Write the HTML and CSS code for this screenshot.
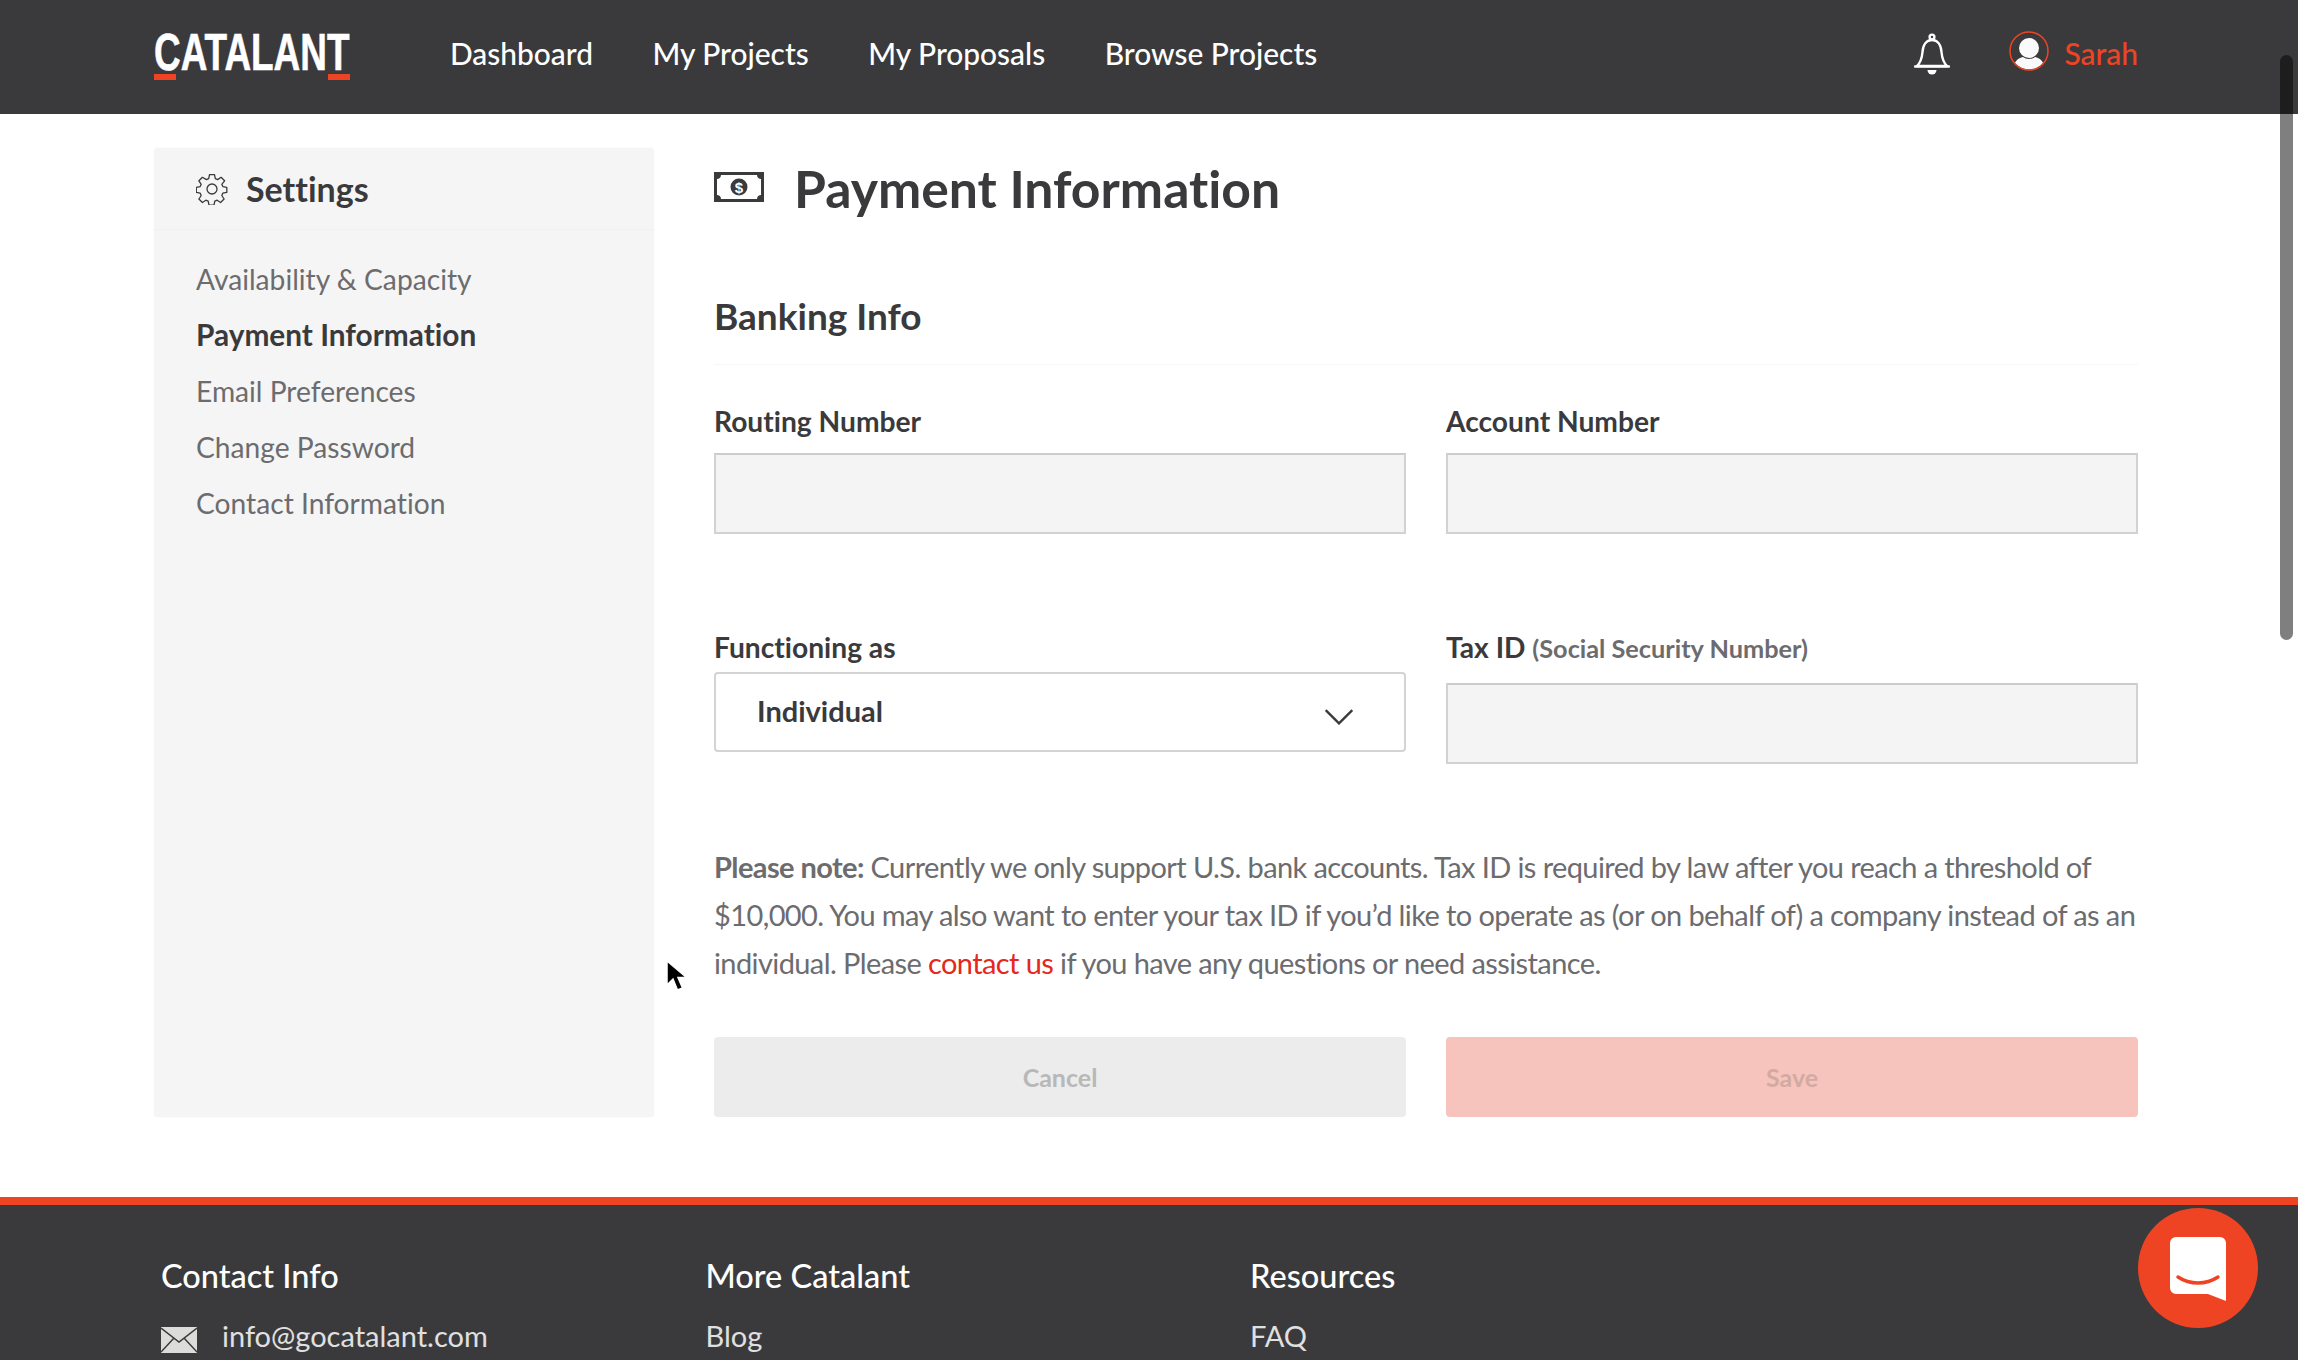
FILE: index.html
```html
<!DOCTYPE html>
<html lang="en">
<head>
<meta charset="utf-8">
<title>Payment Information</title>
<link rel="stylesheet" href="styles.css">
</head>
<body>
<header class="topbar">
  <div class="logo"><span class="logo-text">CATALANT</span><i class="logo-mark logo-mark-l"></i><i class="logo-mark logo-mark-r"></i></div>
  <nav class="topnav">
    <a>Dashboard</a><a>My Projects</a><a>My Proposals</a><a>Browse Projects</a>
  </nav>
  <div class="topright">
    <svg class="bell" viewBox="0 0 36 42" fill="none" stroke="#fff" stroke-width="2.4"><circle cx="18" cy="4" r="2.4"/><path d="M3 33c4-4 5-8 5.500-14C9 11 13 7 18 7s9 4 9.500 12c.5 6 1.500 10 5.500 14z" stroke-linejoin="round"/><path d="M1 33.500h34" stroke-linecap="round"/><path d="M13.500 37h9a4.500 4.500 0 0 1-9 0z" fill="#fff" stroke="none"/></svg>
    <svg class="avatar" viewBox="0 0 40 40"><defs><clipPath id="avclip"><circle cx="20" cy="20" r="18.500"/></clipPath></defs><circle cx="20" cy="20" r="19" fill="#3a3a3d"/><g clip-path="url(#avclip)" fill="#fafafa"><circle cx="20" cy="17" r="10"/><path d="M4 40c0-9 5-13 10-14 3 2.500 9 2.500 12 0 5 1 10 5 10 14z"/></g><circle cx="20" cy="20" r="19" fill="none" stroke="#ef4423" stroke-width="1.500"/></svg>
    <span class="username">Sarah</span>
  </div>
</header>

<div class="content">
  <aside class="sidebar">
    <div class="side-head">
      <svg class="gear" viewBox="0 0 32 32" fill="none" stroke="#3a3a3d" stroke-width="1.300" stroke-linejoin="round"><path d="M13.500 2h5l.8 4 2.300 1 3.500-2.300 3.500 3.500L25.800 11.700l1 2.300 4 .8v5l-4 .8-1 2.300 2.300 3.500-3.500 3.500-3.500-2.300-2.300 1-.8 3.900h-5l-.8-3.900-2.300-1-3.500 2.300-3.500-3.500 2.300-3.500-1-2.300-3.900-.8v-5l3.900-.8 1-2.300-2.300-3.500 3.500-3.500L10.400 7l2.300-1z" transform="translate(0 -.4)"/><circle cx="16" cy="16" r="5"/></svg>
      <span>Settings</span>
    </div>
    <ul class="side-list">
      <li>Availability &amp; Capacity</li>
      <li class="active">Payment Information</li>
      <li>Email Preferences</li>
      <li>Change Password</li>
      <li>Contact Information</li>
    </ul>
  </aside>

  <main class="main">
    <div class="title-row">
      <svg class="money" viewBox="0 0 50 30"><path fill="#3a3a3d" d="M0 0h50v30H0z"/><path fill="#fff" d="M7 3h36c0 2.500 2 4 4 4v16c-2 0-4 1.500-4 4H7c0-2.500-2-4-4-4V7c2 0 4-1.500 4-4z"/><circle cx="25" cy="15" r="8.500" fill="#3a3a3d"/><text x="25" y="20.500" text-anchor="middle" class="money-sign">$</text></svg>
      <h1>Payment Information</h1>
    </div>
    <h2>Banking Info</h2>
    <div class="form-row row-one">
      <div class="field"><label>Routing Number</label><div class="input"></div></div>
      <div class="field"><label>Account Number</label><div class="input"></div></div>
    </div>
    <div class="form-row row-two">
      <div class="field"><label>Functioning as</label>
        <div class="select"><span class="select-value">Individual</span>
          <svg class="chevron" viewBox="0 0 28 16" fill="none" stroke="#3a3a3d" stroke-width="2.200"><path d="M1.500 2l12.500 12.500L26.500 2"/></svg>
        </div>
      </div>
      <div class="field"><label class="tax-label">Tax ID <small>(Social Security Number)</small></label><div class="input"></div></div>
    </div>
    <p class="note"><b>Please note:</b> Currently we only support U.S. bank accounts. Tax ID is required by law after you reach a threshold of<br>$10,000. You may also want to enter your tax ID if you’d like to operate as (or on behalf of) a company instead of as an<br>individual. Please <a>contact us</a> if you have any questions or need assistance.</p>
    <div class="form-row buttons">
      <button class="btn btn-cancel">Cancel</button>
      <button class="btn btn-save">Save</button>
    </div>
  </main>
</div>

<footer class="footer">
  <div class="foot-col">
    <h3>Contact Info</h3>
    <div class="foot-item foot-mail">
      <svg class="mail" viewBox="0 0 36 26"><path fill="#dcdcda" d="M0 0h36v26H0z"/><path d="M0 1l18 14L36 1M0 25l13-14M36 25L23 11" fill="none" stroke="#3a3a3d" stroke-width="1.500"/></svg>
      <span>info@gocatalant.com</span>
    </div>
  </div>
  <div class="foot-col"><h3>More Catalant</h3><div class="foot-item">Blog</div></div>
  <div class="foot-col"><h3>Resources</h3><div class="foot-item">FAQ</div></div>
</footer>

<div class="scrollbar"></div>
<svg class="cursor" viewBox="0 0 22 32"><path d="M2 1v24l6-6 4.500 11 5-2-4.500-10.500h8.500z" fill="#000" stroke="#fff" stroke-width="1.500"/></svg>
<div class="chat">
  <svg class="chat-icon" viewBox="0 0 56 64"><path fill="#fff" d="M6 0h44a6 6 0 0 1 6 6v58L38 57H6a6 6 0 0 1-6-6V6a6 6 0 0 1 6-6z"/><path d="M8 40c12 8 28 8 40 0" fill="none" stroke="#ef4423" stroke-width="3.500" stroke-linecap="round"/></svg>
</div>
</body>
</html>
```

FILE: styles.css
```css
* { box-sizing: border-box; }
html, body { margin: 0; height: 1360px; overflow: hidden; }
body { font-family: Lato, "Open Sans", sans-serif; color: #3a3a3d; background: #fff; position: relative; font-variant-ligatures: none; }

.topbar { height: 114px; background: #3a3a3d; display: flex; align-items: center; padding: 0 160px 8px 154px; }
.logo { position: relative; width: 196px; height: 47px; margin-right: 100px; margin-top: 7px; }
.logo-text { display: block; font: 700 52px/38px "Liberation Sans Narrow", "Liberation Sans", sans-serif; color: #fff; -webkit-text-stroke: .6px #fff; transform-origin: 0 0; transform: scaleX(.71); white-space: nowrap; }
.logo-mark { position: absolute; bottom: 0; width: 22px; height: 6px; background: #ef4423; }
.logo-mark-l { left: 0; }
.logo-mark-r { right: 0; }
.topnav { display: flex; gap: 59.5px; font-size: 29.9px; font-weight: 500; color: #fff; }
.topright { margin-left: auto; display: flex; align-items: center; }
.bell { width: 36px; height: 42px; margin-right: 59px; margin-top: 1px; }
.avatar { width: 40px; height: 40px; margin-right: 15px; margin-top: -4px; }
.username { font-size: 30px; font-weight: 500; color: #ef4423; }

.content { display: flex; gap: 60px; padding: 34px 160px 0 154px; }
.sidebar { width: 500px; height: 969px; background: #f5f5f5; border-radius: 4px; box-shadow: 0 0 2px rgba(0,0,0,.06); flex: none; }
.side-head { height: 82px; padding: 0 42px; display: flex; align-items: center; gap: 18px; font-size: 34px; font-weight: 700; border-bottom: 1px solid #f0f0f0; }
.gear { width: 32px; height: 32px; }
.side-list { list-style: none; margin: 0; padding: 21px 42px 0; font-size: 28.2px; color: #6c6c6f; }
.side-list li { height: 56px; line-height: 56px; }
.side-list .active { color: #3a3a3d; font-weight: 700; font-size: 29.8px; }

.main { flex: 1; min-width: 0; }
.title-row { display: flex; align-items: center; gap: 30px; height: 80px; }
.money { width: 50px; height: 30px; margin-top: -2px; }
.money-sign { font: 700 15px "Liberation Sans", sans-serif; fill: #fff; }
h1 { margin: 0; font-size: 51.7px; font-weight: 700; }
h2 { margin: 63px 0 0; font-size: 37px; font-weight: 700; height: 74px; line-height: 50px; border-bottom: 1px solid #f7f7f7; }

.form-row { display: grid; grid-template-columns: 692px 692px; gap: 40px; }
.row-one { margin-top: 36px; height: 144px; }
.row-two { margin-top: 84px; height: 154px; }
label { display: block; font-size: 28.2px; font-weight: 700; line-height: 40px; margin-bottom: 12px; }
.row-two label { margin-bottom: 7px; line-height: 36px; }
.row-two .tax-label { margin-bottom: 17px; }
.tax-label small { font-size: 25.3px; color: #6c6c6f; }
.input { height: 81px; background: #f4f4f4; border: 2px solid #d2d2d2; border-top-color: #cccccc; }
.select { height: 80px; background: #fff; border: 2px solid #d4d4d4; border-radius: 4px; display: flex; align-items: center; justify-content: space-between; padding: 0 50px 0 41px; font-size: 29px; font-weight: 700; }
.select-value { margin-top: -3px; }
.chevron { width: 30px; height: 17px; margin-top: 9px; }

.note { margin: 60px 0 0; font-size: 29px; line-height: 48px; color: #6c6c6f; letter-spacing: -.6px; white-space: nowrap; }
.note a { color: #e5281c; }
.buttons { margin-top: 50px; }
.btn { height: 80px; border: 0; border-radius: 4px; font: 700 25px Lato, sans-serif; color: #fff; }
.btn-cancel { background: #ececec; color: #b8b8b8; }
.btn-save { background: #f6c4bc; color: #d3aaa2; }

.footer { margin-top: 80px; height: 163px; background: #3a3a3d; border-top: 8px solid #ef4423; display: flex; padding: 51px 0 0 161px; color: #fff; }
.foot-col { width: 544.500px; }
h3 { margin: 0; font-size: 32.5px; font-weight: 500; line-height: 40px; }
.foot-item { margin-top: 20px; font-size: 29px; line-height: 40px; color: #e0e0e0; }
.foot-mail { display: flex; align-items: center; gap: 25px; }
.mail { width: 36px; height: 26px; margin-top: 8px; }

.scrollbar { position: absolute; left: 2280px; top: 55px; width: 13px; height: 585px; border-radius: 7px; background: rgba(0,0,0,.5); }
.cursor { position: absolute; left: 665px; top: 960px; width: 22px; height: 32px; }
.chat { position: absolute; left: 2138px; top: 1208px; width: 120px; height: 120px; border-radius: 50%; background: #ef4423; display: flex; align-items: center; justify-content: center; }
.chat-icon { width: 56px; height: 64px; margin-top: 2px; }
```
